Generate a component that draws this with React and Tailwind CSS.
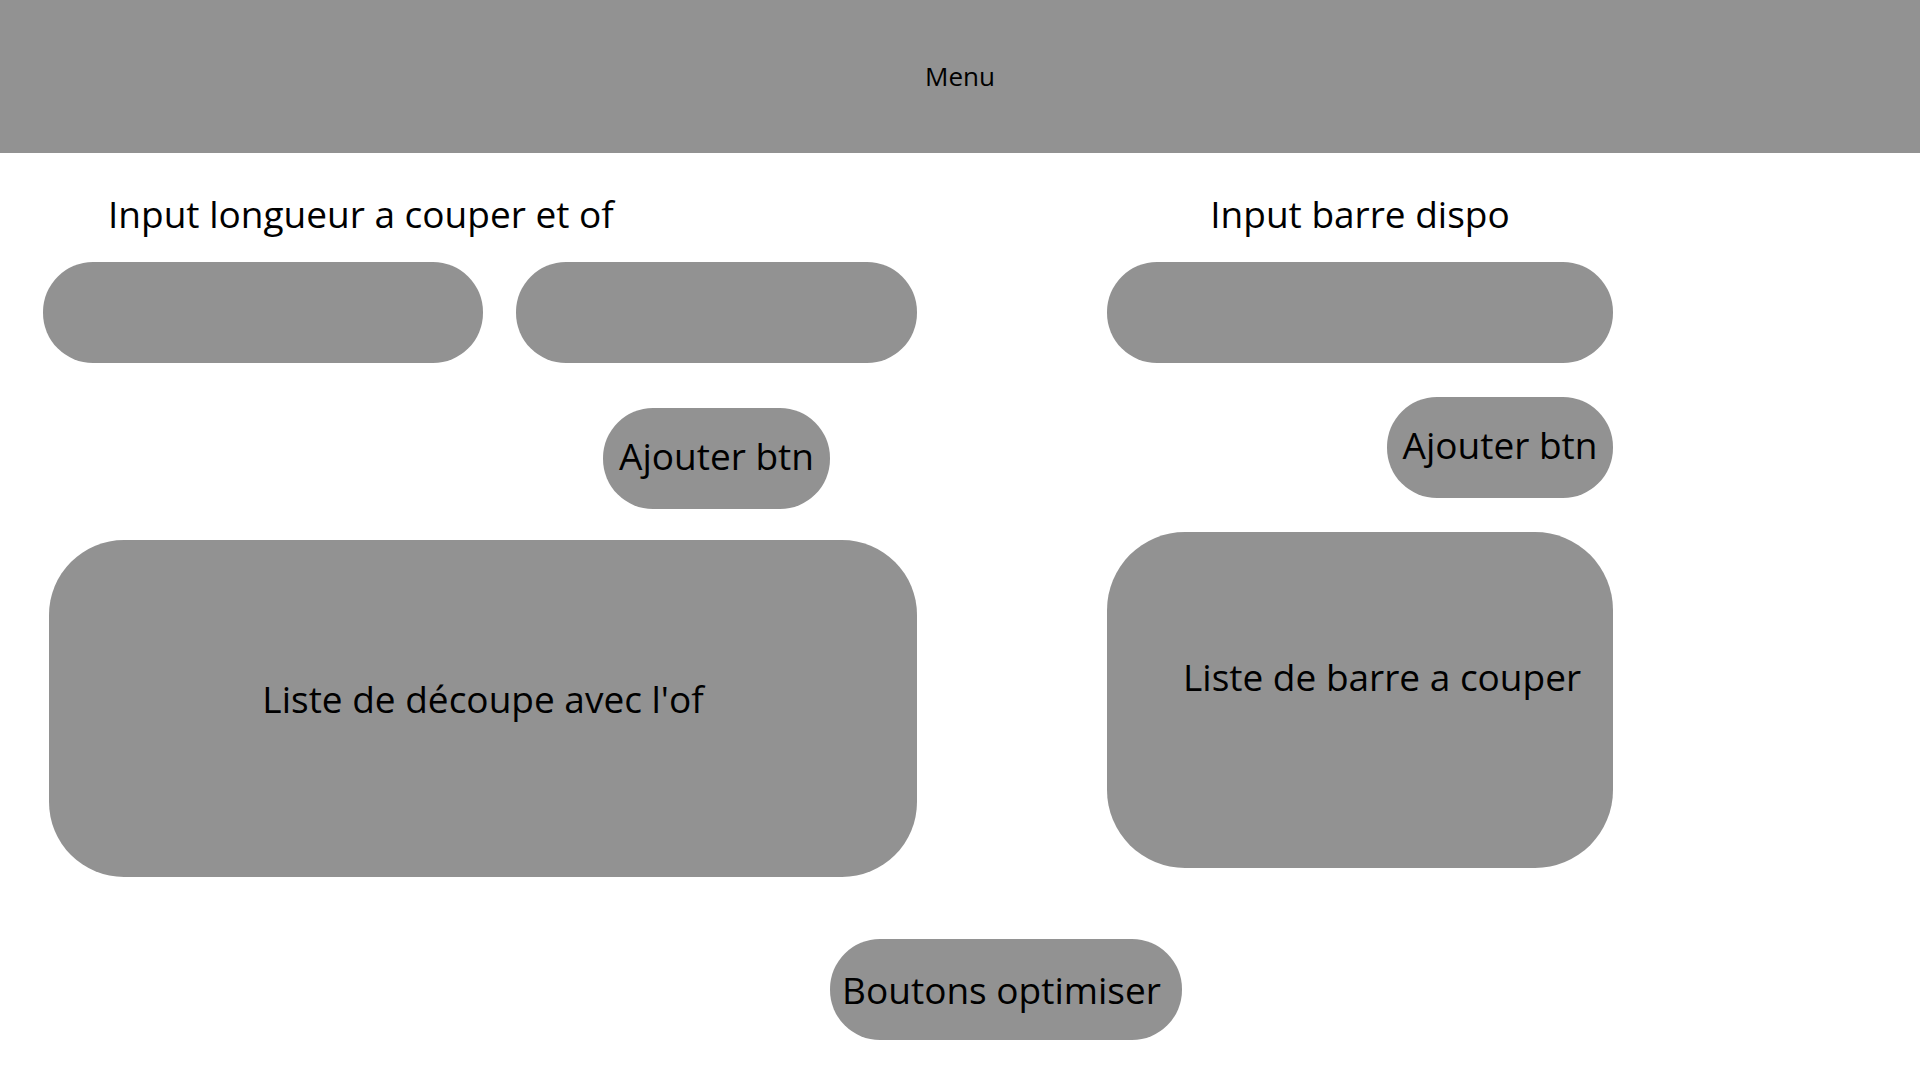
const PILL = 'bg-[#929292] rounded-[50px] h-[101px]';
const LABEL = 'text-[37px] leading-[52px] text-black';

const Pill = ({ className = '', children }) => (
  <div className={`${PILL} flex items-center justify-center ${className}`}>
    {children && <span className={LABEL}>{children}</span>}
  </div>
);

const App = () => {
  return (
    <div className="w-[1920px] h-[1080px] bg-white overflow-hidden font-['Open_Sans',sans-serif]">
      <header className="h-[153px] bg-[#929292] flex items-center justify-center">
        <span className="text-[26px] text-black">Menu</span>
      </header>

      <div className="flex">
        {/* colonne gauche */}
        <div className="ml-[43px] w-[874px] flex flex-col">
          <h2 className={`${LABEL} mt-[35px] pl-[65px]`}>Input longueur a couper et of</h2>
          <div className="flex gap-[33px] mt-[22px]">
            <Pill className="w-[440px]" />
            <Pill className="w-[401px]" />
          </div>
          <Pill className="ml-[560px] mt-[45px] w-[227px] pb-[5px]">Ajouter btn</Pill>
          <div className="ml-[6px] mt-[31px] w-[868px] h-[337px] bg-[#929292] rounded-[75px] flex justify-center pt-[133px]">
            <span className={LABEL}>Liste de découpe avec l'of</span>
          </div>
        </div>

        {/* colonne droite */}
        <div className="ml-[190px] w-[506px] flex flex-col">
          <h2 className={`${LABEL} mt-[35px] text-center`}>Input barre dispo</h2>
          <Pill className="mt-[22px] w-[506px]" />
          <Pill className="self-end mt-[34px] w-[226px] pb-[5px]">Ajouter btn</Pill>
          <div className="mt-[34px] w-[506px] h-[336px] bg-[#929292] rounded-[78px] pt-[119px] pl-[76px]">
            <span className={LABEL}>Liste de barre a couper</span>
          </div>
        </div>
      </div>

      <div className="flex mt-[62px] ml-[830px]">
        <Pill className="w-[352px] pr-[9px]">Boutons optimiser</Pill>
      </div>
    </div>
  );
};

export default App;
